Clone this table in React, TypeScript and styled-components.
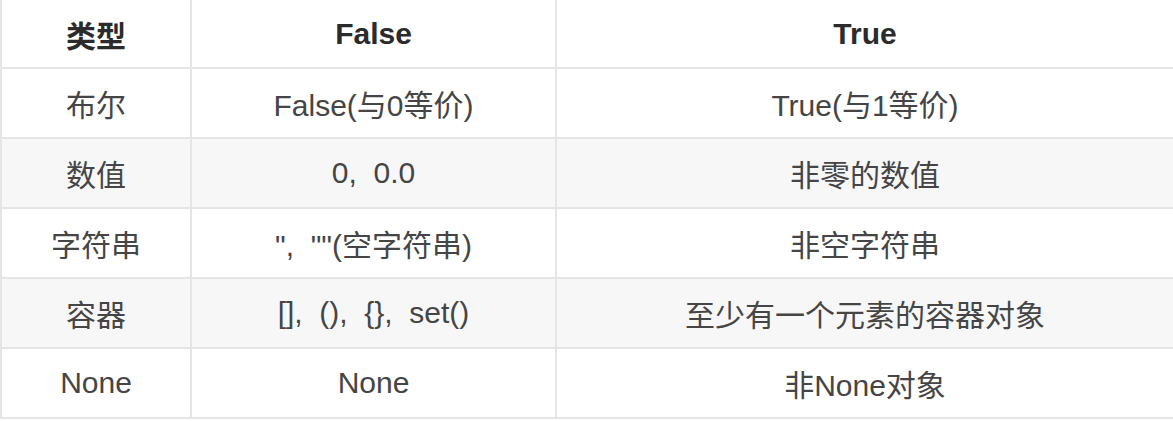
import React from "react";
import styled, { createGlobalStyle } from "styled-components";

const GlobalStyle = createGlobalStyle`
  html, body {
    margin: 0;
    padding: 0;
    background: #ffffff;
    overflow: hidden;
  }
  body {
    font-family: "Liberation Sans", Arial, "Noto Sans CJK SC", sans-serif;
  }
`;

const Table = styled.div`
  display: grid;
  grid-template-columns: 190px 365px 618px;
  width: 1173px;
`;

const Cell = styled.div<{ $head?: boolean; $striped?: boolean }>`
  box-sizing: border-box;
  height: ${(p) => (p.$head ? 69 : 70)}px;
  border-left: 2px solid #e5e5e5;
  border-bottom: 2px solid #e5e5e5;
  background: ${(p) => (p.$striped ? "#f7f7f7" : "#ffffff")};
  display: flex;
  align-items: center;
  justify-content: center;
  font-size: 30px;
  font-weight: ${(p) => (p.$head ? 700 : 400)};
  color: ${(p) => (p.$head ? "#2b2b2b" : "#454545")};
  white-space: pre;
`;

const header = ["类型", "False", "True"];
const rows: string[][] = [
  ["布尔", "False(与0等价)", "True(与1等价)"],
  ["数值", "0,  0.0", "非零的数值"],
  ["字符串", "\",  \"\"(空字符串)", "非空字符串"],
  ["容器", "[],  (),  {},  set()", "至少有一个元素的容器对象"],
  ["None", "None", "非None对象"],
];

export default function App() {
  return (
    <>
      <GlobalStyle />
      <Table>
        {header.map((h) => (
          <Cell key={h} $head>
            {h}
          </Cell>
        ))}
        {rows.map((r, i) =>
          r.map((c, j) => (
            <Cell key={`${i}-${j}`} $striped={i % 2 === 1}>
              {c}
            </Cell>
          ))
        )}
      </Table>
    </>
  );
}
